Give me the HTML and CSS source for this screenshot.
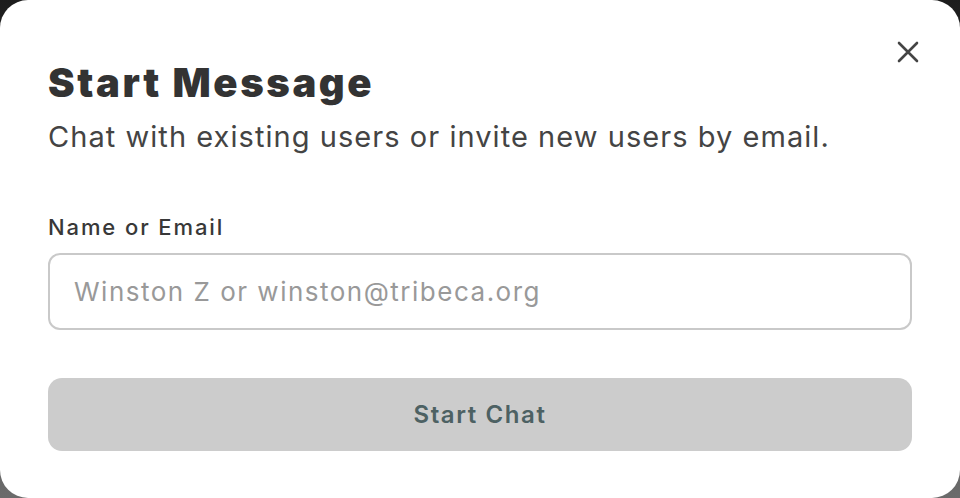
FILE: index.html
```html
<!DOCTYPE html>
<html lang="en">
<head>
<meta charset="utf-8">
<title>Start Message</title>
<link rel="stylesheet" href="styles.css">
</head>
<body>
<div class="modal">
  <button class="close" aria-label="Close">
    <svg width="22" height="22" viewBox="0 0 22 22"><path d="M2 2L20 20M20 2L2 20" stroke="#444" stroke-width="2.6" stroke-linecap="round"/></svg>
  </button>
  <h1 class="title">Start Message</h1>
  <p class="subtitle">Chat with existing users or invite new users by email.</p>
  <label class="label" for="who">Name or Email</label>
  <input class="input" id="who" type="text" placeholder="Winston Z or winston@tribeca.org">
  <button class="submit">Start Chat</button>
</div>
</body>
</html>
```

FILE: styles.css
```css
html, body {
  margin: 0;
  height: 100%;
}
body {
  background: linear-gradient(#1c1c1c, #6b6b6b);
  font-family: Inter, "Open Sans", sans-serif;
  overflow: hidden;
}
.modal {
  position: relative;
  box-sizing: border-box;
  height: 498px;
  background: #fff;
  border-radius: 28px;
  padding: 59px 48px 0 48px;
  display: flex;
  flex-direction: column;
}
.close {
  position: absolute;
  top: 41px;
  right: 41px;
  border: 0;
  background: none;
  padding: 0;
  width: 22px;
  height: 22px;
  cursor: pointer;
}
.title {
  margin: 0;
  font-size: 40px;
  line-height: 48px;
  font-weight: 900;
  color: #333;
  letter-spacing: 2.6px;
}
.subtitle {
  margin: 12px 0 0 0;
  font-size: 29px;
  line-height: 36px;
  font-weight: 400;
  color: #444;
  letter-spacing: 1.05px;
}
.label {
  margin-top: 58px;
  font-size: 22px;
  line-height: 28px;
  font-weight: 500;
  color: #383838;
  letter-spacing: 1.9px;
}
.input {
  margin-top: 12px;
  box-sizing: border-box;
  height: 77px;
  border: 2px solid #c9c9c9;
  border-radius: 12px;
  padding: 0 24px;
  font-family: inherit;
  font-size: 26px;
  letter-spacing: 1.5px;
  color: #333;
  outline: none;
}
.input::placeholder {
  color: #999;
}
.submit {
  margin-top: 48px;
  height: 73px;
  border: 0;
  border-radius: 14px;
  background: #cccccc;
  color: #4d6163;
  font-family: inherit;
  font-size: 24px;
  font-weight: 600;
  letter-spacing: 1.6px;
}
```
